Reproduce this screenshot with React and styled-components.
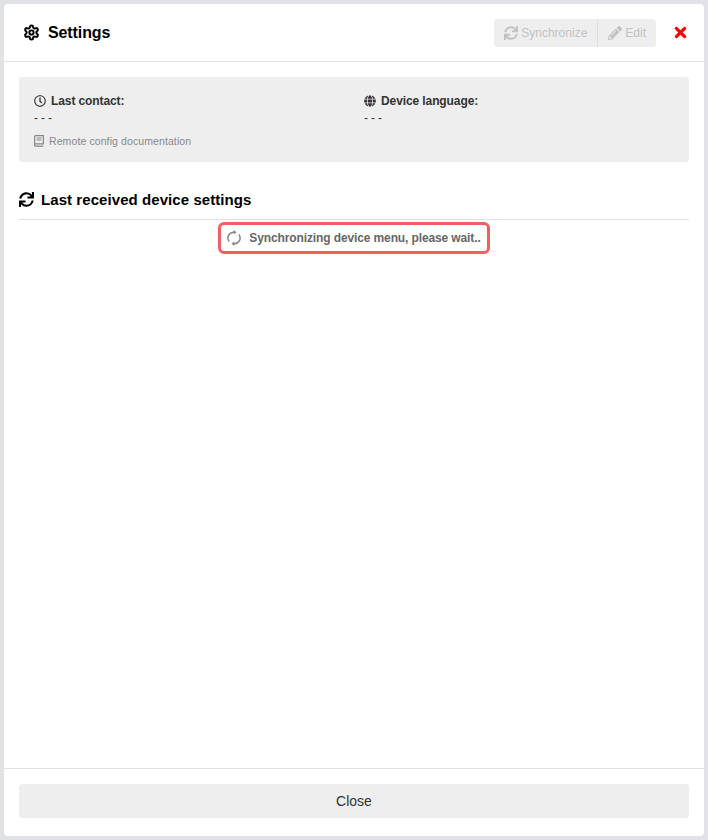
import styled, { createGlobalStyle } from "styled-components";
import { FaGlobe, FaRegClock, FaSync, FaTimes, FaPencilAlt } from "react-icons/fa";
import { LuSettings } from "react-icons/lu";

const GlobalStyle = createGlobalStyle`
  html, body {
    margin: 0;
    padding: 0;
    height: 100%;
  }
  body {
    background: #e1e2e5;
    font-family: "Liberation Sans", Arial, sans-serif;
    color: #000;
  }
`;

const App = () => (
  <>
    <GlobalStyle />
    <Page>
      <Modal>
        <Header>
          <Title>
            <LuSettings size={17} strokeWidth={2.8} />
            Settings
          </Title>
          <HeaderActions>
            <ButtonGroup>
              <GroupButton type="button">
                <FaSync size={14} />
                Synchronize
              </GroupButton>
              <GroupButton type="button" $divided>
                <FaPencilAlt size={14} />
                Edit
              </GroupButton>
            </ButtonGroup>
            <CloseIcon>
              <FaTimes size={17} />
            </CloseIcon>
          </HeaderActions>
        </Header>

        <Body>
          <InfoBox>
            <InfoGrid>
              <InfoColumn>
                <InfoLabel>
                  <FaRegClock size={12} />
                  Last contact:
                </InfoLabel>
                <InfoValue>---</InfoValue>
              </InfoColumn>
              <InfoColumn>
                <InfoLabel>
                  <FaGlobe size={12} />
                  Device language:
                </InfoLabel>
                <InfoValue>---</InfoValue>
              </InfoColumn>
            </InfoGrid>
            <DocLink>
              <BookIcon />
              Remote config documentation
            </DocLink>
          </InfoBox>

          <SectionTitle>
            <FaSync size={15} />
            Last received device settings
          </SectionTitle>

          <StatusRow>
            <StatusBadge>
              <SpinnerIcon />
              Synchronizing device menu, please wait..
            </StatusBadge>
          </StatusRow>
        </Body>

        <Footer>
          <FooterButton type="button">Close</FooterButton>
        </Footer>
      </Modal>
    </Page>
  </>
);

const BookIcon = () => (
  <svg width="10" height="12" viewBox="0 0 10 12" fill="none" stroke="currentColor" strokeWidth="1.2">
    <path d="M.6 10.5V1.6a1 1 0 0 1 1-1h7.8v8.2H1.6a1 1 0 0 0 0 2.4h7.8" />
    <path d="M2.5 3h5M2.5 5h5" />
  </svg>
);

const SpinnerIcon = () => (
  <svg width="14" height="16" viewBox="0 0 14 16" fill="none">
    <path d="M2.2 11.6A5.8 5.8 0 0 1 7 2.2" stroke="#888" strokeWidth="1.5" />
    <path d="M11.8 4.4A5.8 5.8 0 0 1 7 13.8" stroke="#888" strokeWidth="1.5" />
    <path d="M6.6 0v4.6L9.6 2.3zM7.4 11.4V16l-3-2.3z" fill="#888" />
  </svg>
);

export default App;

// Styled Components
const Page = styled.div`
  height: 840px;
  padding: 4px;
  box-sizing: border-box;
`;

const Modal = styled.div`
  display: flex;
  flex-direction: column;
  height: 832px;
  background: #fff;
  border-radius: 4px;
`;

const Header = styled.div`
  display: flex;
  justify-content: space-between;
  align-items: center;
  height: 57px;
  padding: 0 15px 0 19px;
  border-bottom: 1px solid #e2e2e2;
  flex-shrink: 0;
`;

const Title = styled.div`
  display: flex;
  align-items: center;
  gap: 8px;
  font-size: 16px;
  font-weight: 700;
  letter-spacing: -0.1px;
`;

const HeaderActions = styled.div`
  display: flex;
  align-items: center;
  gap: 16px;
`;

const ButtonGroup = styled.div`
  display: flex;
  height: 28px;
  border-radius: 3px;
  overflow: hidden;
  background: #eeeeef;
`;

const GroupButton = styled.button`
  display: flex;
  align-items: center;
  gap: 3px;
  padding: 0 10px;
  border: none;
  border-left: ${(p) => (p.$divided ? "1px solid #ddd" : "none")};
  background: transparent;
  color: #c2c2c2;
  font-family: inherit;
  font-size: 12px;
`;

const CloseIcon = styled.span`
  display: flex;
  color: #f00;
`;

const Body = styled.div`
  flex: 1;
  padding: 15px 15px 0;
`;

const InfoBox = styled.div`
  height: 85px;
  box-sizing: border-box;
  padding: 16px 15px 0;
  background: #eeeeef;
  border-radius: 3px;
`;

const InfoGrid = styled.div`
  display: grid;
  grid-template-columns: 330px 1fr;
`;

const InfoColumn = styled.div`
  display: flex;
  flex-direction: column;
`;

const InfoLabel = styled.div`
  display: flex;
  align-items: center;
  gap: 5px;
  height: 15px;
  font-size: 12px;
  font-weight: 700;
  letter-spacing: -0.1px;
  color: #333;
`;

const InfoValue = styled.div`
  height: 18px;
  line-height: 18px;
  margin-top: 1px;
  font-size: 12px;
  letter-spacing: 3px;
  color: #333;
`;

const DocLink = styled.div`
  display: flex;
  align-items: center;
  gap: 5px;
  margin-top: 8px;
  font-size: 10.5px;
  letter-spacing: 0.1px;
  color: #888;
`;

const SectionTitle = styled.div`
  display: flex;
  align-items: center;
  gap: 7px;
  height: 58px;
  box-sizing: border-box;
  padding-top: 17px;
  border-bottom: 1px solid #e2e2e2;
  font-size: 15px;
  font-weight: 700;
  letter-spacing: 0.07px;
`;

const StatusRow = styled.div`
  display: flex;
  justify-content: center;
  margin-top: 2px;
`;

const StatusBadge = styled.div`
  display: flex;
  align-items: center;
  gap: 8px;
  height: 32px;
  box-sizing: border-box;
  padding: 0 6px;
  border: 3px solid #f25f5f;
  border-radius: 6px;
  font-size: 12px;
  font-weight: 700;
  letter-spacing: -0.12px;
  color: #666;
`;

const Footer = styled.div`
  height: 68px;
  box-sizing: border-box;
  padding: 15px;
  border-top: 1px solid #e2e2e2;
  flex-shrink: 0;
`;

const FooterButton = styled.button`
  width: 100%;
  height: 34px;
  border: none;
  border-radius: 3px;
  background: #eeeeef;
  color: #333;
  font-family: inherit;
  font-size: 14px;
`;
